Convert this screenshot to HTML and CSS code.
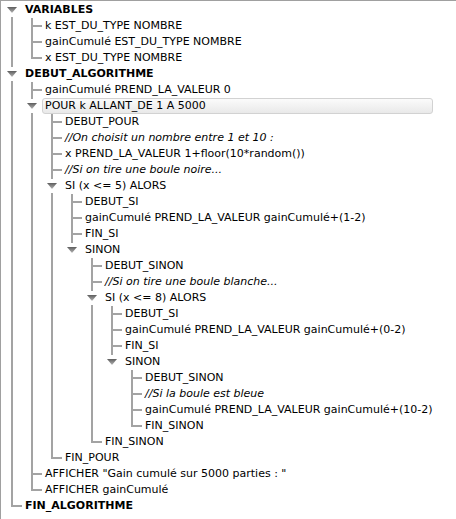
FILE: index.html
```html
<!DOCTYPE html>
<html>
<head>
<meta charset="utf-8">
<link rel="stylesheet" href="styles.css">
</head>
<body>
<div class="tree">
  <ul class="root">
    <li class="open">
      <div class="row"><span class="tog"><svg viewBox="0 0 10 7" width="10" height="7"><defs><linearGradient id="g" x1="0" y1="0" x2="0" y2="1"><stop offset="0" stop-color="#5e5e5e"/><stop offset="1" stop-color="#b4b4b4"/></linearGradient></defs><polygon points="0,0 10,0 5,6" fill="url(#g)"/></svg></span><span class="lbl b">VARIABLES</span></div>
      <ul>
        <li><div class="row"><span class="lbl">k EST_DU_TYPE NOMBRE</span></div></li>
        <li><div class="row"><span class="lbl">gainCumulé EST_DU_TYPE NOMBRE</span></div></li>
        <li><div class="row"><span class="lbl">x EST_DU_TYPE NOMBRE</span></div></li>
      </ul>
    </li>
    <li class="open">
      <div class="row"><span class="tog"><svg viewBox="0 0 10 7" width="10" height="7"><polygon points="0,0 10,0 5,6" fill="url(#g)"/></svg></span><span class="lbl b">DEBUT_ALGORITHME</span></div>
      <ul>
        <li><div class="row"><span class="lbl">gainCumulé PREND_LA_VALEUR 0</span></div></li>
        <li class="open">
          <div class="row sel"><span class="tog"><svg viewBox="0 0 10 7" width="10" height="7"><polygon points="0,0 10,0 5,6" fill="url(#g)"/></svg></span><span class="lbl">POUR k ALLANT_DE 1 A 5000</span></div>
          <ul>
            <li><div class="row"><span class="lbl">DEBUT_POUR</span></div></li>
            <li><div class="row"><span class="lbl i">//On choisit un nombre entre 1 et 10 :</span></div></li>
            <li><div class="row"><span class="lbl">x PREND_LA_VALEUR 1+floor(10*random())</span></div></li>
            <li><div class="row"><span class="lbl i">//Si on tire une boule noire...</span></div></li>
            <li class="open">
              <div class="row"><span class="tog"><svg viewBox="0 0 10 7" width="10" height="7"><polygon points="0,0 10,0 5,6" fill="url(#g)"/></svg></span><span class="lbl">SI (x &lt;= 5) ALORS</span></div>
              <ul>
                <li><div class="row"><span class="lbl">DEBUT_SI</span></div></li>
                <li><div class="row"><span class="lbl">gainCumulé PREND_LA_VALEUR gainCumulé+(1-2)</span></div></li>
                <li><div class="row"><span class="lbl">FIN_SI</span></div></li>
                <li class="open">
                  <div class="row"><span class="tog"><svg viewBox="0 0 10 7" width="10" height="7"><polygon points="0,0 10,0 5,6" fill="url(#g)"/></svg></span><span class="lbl">SINON</span></div>
                  <ul>
                    <li><div class="row"><span class="lbl">DEBUT_SINON</span></div></li>
                    <li><div class="row"><span class="lbl i">//Si on tire une boule blanche...</span></div></li>
                    <li class="open">
                      <div class="row"><span class="tog"><svg viewBox="0 0 10 7" width="10" height="7"><polygon points="0,0 10,0 5,6" fill="url(#g)"/></svg></span><span class="lbl">SI (x &lt;= 8) ALORS</span></div>
                      <ul>
                        <li><div class="row"><span class="lbl">DEBUT_SI</span></div></li>
                        <li><div class="row"><span class="lbl">gainCumulé PREND_LA_VALEUR gainCumulé+(0-2)</span></div></li>
                        <li><div class="row"><span class="lbl">FIN_SI</span></div></li>
                        <li class="open">
                          <div class="row"><span class="tog"><svg viewBox="0 0 10 7" width="10" height="7"><polygon points="0,0 10,0 5,6" fill="url(#g)"/></svg></span><span class="lbl">SINON</span></div>
                          <ul>
                            <li><div class="row"><span class="lbl">DEBUT_SINON</span></div></li>
                            <li><div class="row"><span class="lbl i">//Si la boule est bleue</span></div></li>
                            <li><div class="row"><span class="lbl">gainCumulé PREND_LA_VALEUR gainCumulé+(10-2)</span></div></li>
                            <li><div class="row"><span class="lbl">FIN_SINON</span></div></li>
                          </ul>
                        </li>
                      </ul>
                    </li>
                    <li><div class="row"><span class="lbl">FIN_SINON</span></div></li>
                  </ul>
                </li>
              </ul>
            </li>
            <li><div class="row"><span class="lbl">FIN_POUR</span></div></li>
          </ul>
        </li>
        <li><div class="row"><span class="lbl">AFFICHER "Gain cumulé sur 5000 parties : "</span></div></li>
        <li><div class="row"><span class="lbl">AFFICHER gainCumulé</span></div></li>
      </ul>
    </li>
    <li><div class="row"><span class="lbl b">FIN_ALGORITHME</span></div></li>
  </ul>
</div>
</body>
</html>
```
FILE: styles.css
```css
html, body {
  margin: 0;
  padding: 0;
  background: #ffffff;
}

.tree {
  width: 455px;
  height: 518px;
  border-top: 1px solid #a0a0a0;
  border-left: 1px solid #a0a0a0;
  padding-top: 1px;
  font-family: "DejaVu Sans", sans-serif;
  font-size: 11px;
  color: #000000;
  background: #ffffff;
}

.tree ul {
  list-style: none;
  margin: 0;
  padding: 0 0 0 20px;
}

.tree ul.root {
  padding-left: 0;
}

.tree li {
  position: relative;
}

/* vertical line of the parent list */
.tree li::before {
  content: "";
  position: absolute;
  left: 10px;
  top: 0;
  bottom: 0;
  width: 2px;
  background: #a3a3a3;
}

.tree li:last-child::before {
  bottom: auto;
  height: 9px;
}

.tree ul.root > li:first-child::before {
  top: 8px;
}

/* horizontal connector */
.tree li::after {
  content: "";
  position: absolute;
  left: 12px;
  top: 7px;
  width: 9px;
  height: 2px;
  background: #a3a3a3;
}

.tree li.open::after {
  display: none;
}

.row {
  position: relative;
  z-index: 1;
  display: flex;
  align-items: center;
  height: 16px;
  padding-left: 24px;
  white-space: nowrap;
}

.lbl {
  line-height: 16px;
}

.b {
  font-weight: bold;
}

.i {
  font-style: italic;
}

.tog {
  position: absolute;
  left: 4px;
  top: 1px;
  width: 14px;
  height: 14px;
  background: #ffffff;
  display: flex;
  align-items: center;
  justify-content: center;
}

.tog svg {
  display: block;
  margin-top: 1px;
}

.row.sel .lbl {
  flex: 1;
  margin-left: -3px;
  padding-left: 2px;
  margin-right: 23px;
  height: 14px;
  line-height: 14px;
  border: 1px solid #d2d2d2;
  border-radius: 3px;
  background: linear-gradient(#fbfbfb, #e9e9e9);
}
```
